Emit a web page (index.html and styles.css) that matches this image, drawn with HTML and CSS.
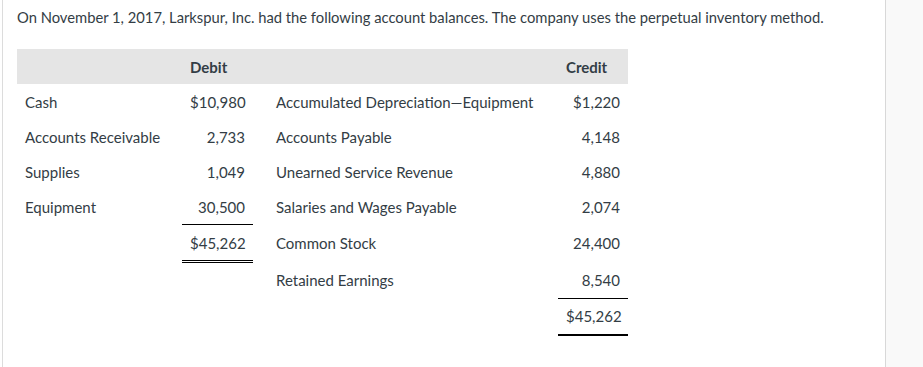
FILE: index.html
```html
<!DOCTYPE html>
<html lang="en">
<head>
<meta charset="utf-8">
<title>Account balances</title>
<link rel="stylesheet" href="styles.css">
</head>
<body>
<div class="page">
  <div class="gutter"></div>
  <main class="main">
    <p class="intro">On November 1, 2017, Larkspur, Inc. had the following account balances. The company uses the perpetual inventory method.</p>
    <table class="ledger">
      <colgroup>
        <col class="c1"><col class="c2"><col class="c3"><col class="c4">
      </colgroup>
      <thead>
        <tr>
          <th></th>
          <th class="h-num">Debit</th>
          <th></th>
          <th class="h-num">Credit</th>
        </tr>
      </thead>
      <tbody>
        <tr>
          <td class="acct">Cash</td>
          <td class="num">$10,980</td>
          <td class="acct2">Accumulated Depreciation—Equipment</td>
          <td class="num">$1,220</td>
        </tr>
        <tr>
          <td class="acct">Accounts Receivable</td>
          <td class="num">2,733</td>
          <td class="acct2">Accounts Payable</td>
          <td class="num">4,148</td>
        </tr>
        <tr>
          <td class="acct">Supplies</td>
          <td class="num">1,049</td>
          <td class="acct2">Unearned Service Revenue</td>
          <td class="num">4,880</td>
        </tr>
        <tr>
          <td class="acct">Equipment</td>
          <td class="num under">30,500</td>
          <td class="acct2">Salaries and Wages Payable</td>
          <td class="num">2,074</td>
        </tr>
        <tr>
          <td class="acct"></td>
          <td class="num double">$45,262</td>
          <td class="acct2">Common Stock</td>
          <td class="num">24,400</td>
        </tr>
        <tr>
          <td class="acct"></td>
          <td class="num"></td>
          <td class="acct2">Retained Earnings</td>
          <td class="num under">8,540</td>
        </tr>
        <tr>
          <td class="acct"></td>
          <td class="num"></td>
          <td class="acct2"></td>
          <td class="num thick">$45,262</td>
        </tr>
      </tbody>
    </table>
  </main>
  <aside class="side"></aside>
</div>
</body>
</html>
```
FILE: styles.css
```css
html, body {
  margin: 0;
  padding: 0;
  height: 100%;
  background: #ffffff;
}

body {
  font-family: Lato, "Open Sans", sans-serif;
  font-size: 15px;
  color: #333d45;
}

.page {
  display: flex;
  height: 367px;
  overflow: hidden;
}

.gutter {
  width: 2px;
  flex: 0 0 2px;
}

.main {
  flex: 0 0 883px;
  border-left: 1px solid #dcdcdc;
  padding: 7px 0 0 14px;
  box-sizing: border-box;
}

.side {
  flex: 1 1 auto;
  border-left: 1px solid #d8d8d8;
  background: #f9f9f9;
}

.intro {
  margin: 0 0 22px;
  line-height: 20px;
  font-size: 14.75px;
}

.ledger {
  border-collapse: collapse;
  table-layout: fixed;
  width: 611px;
}

.c1 { width: 165px; }
.c2 { width: 71px; }
.c3 { width: 305px; }
.c4 { width: 70px; }

.ledger thead tr {
  background: #e5e5e5;
}

.ledger th {
  height: 35px;
  padding: 0 8px;
  font-weight: 700;
  text-align: left;
}

.ledger td {
  height: 35px;
  padding: 0 8px;
  white-space: nowrap;
}

.ledger td.acct2 {
  padding-left: 23px;
}

.ledger td.num {
  text-align: right;
}

.ledger td.under {
  border-bottom: 1px solid #000;
}

.ledger td.double {
  border-bottom: 3px double #000;
}

.ledger td.thick {
  border-bottom: 2px solid #000;
}
```
